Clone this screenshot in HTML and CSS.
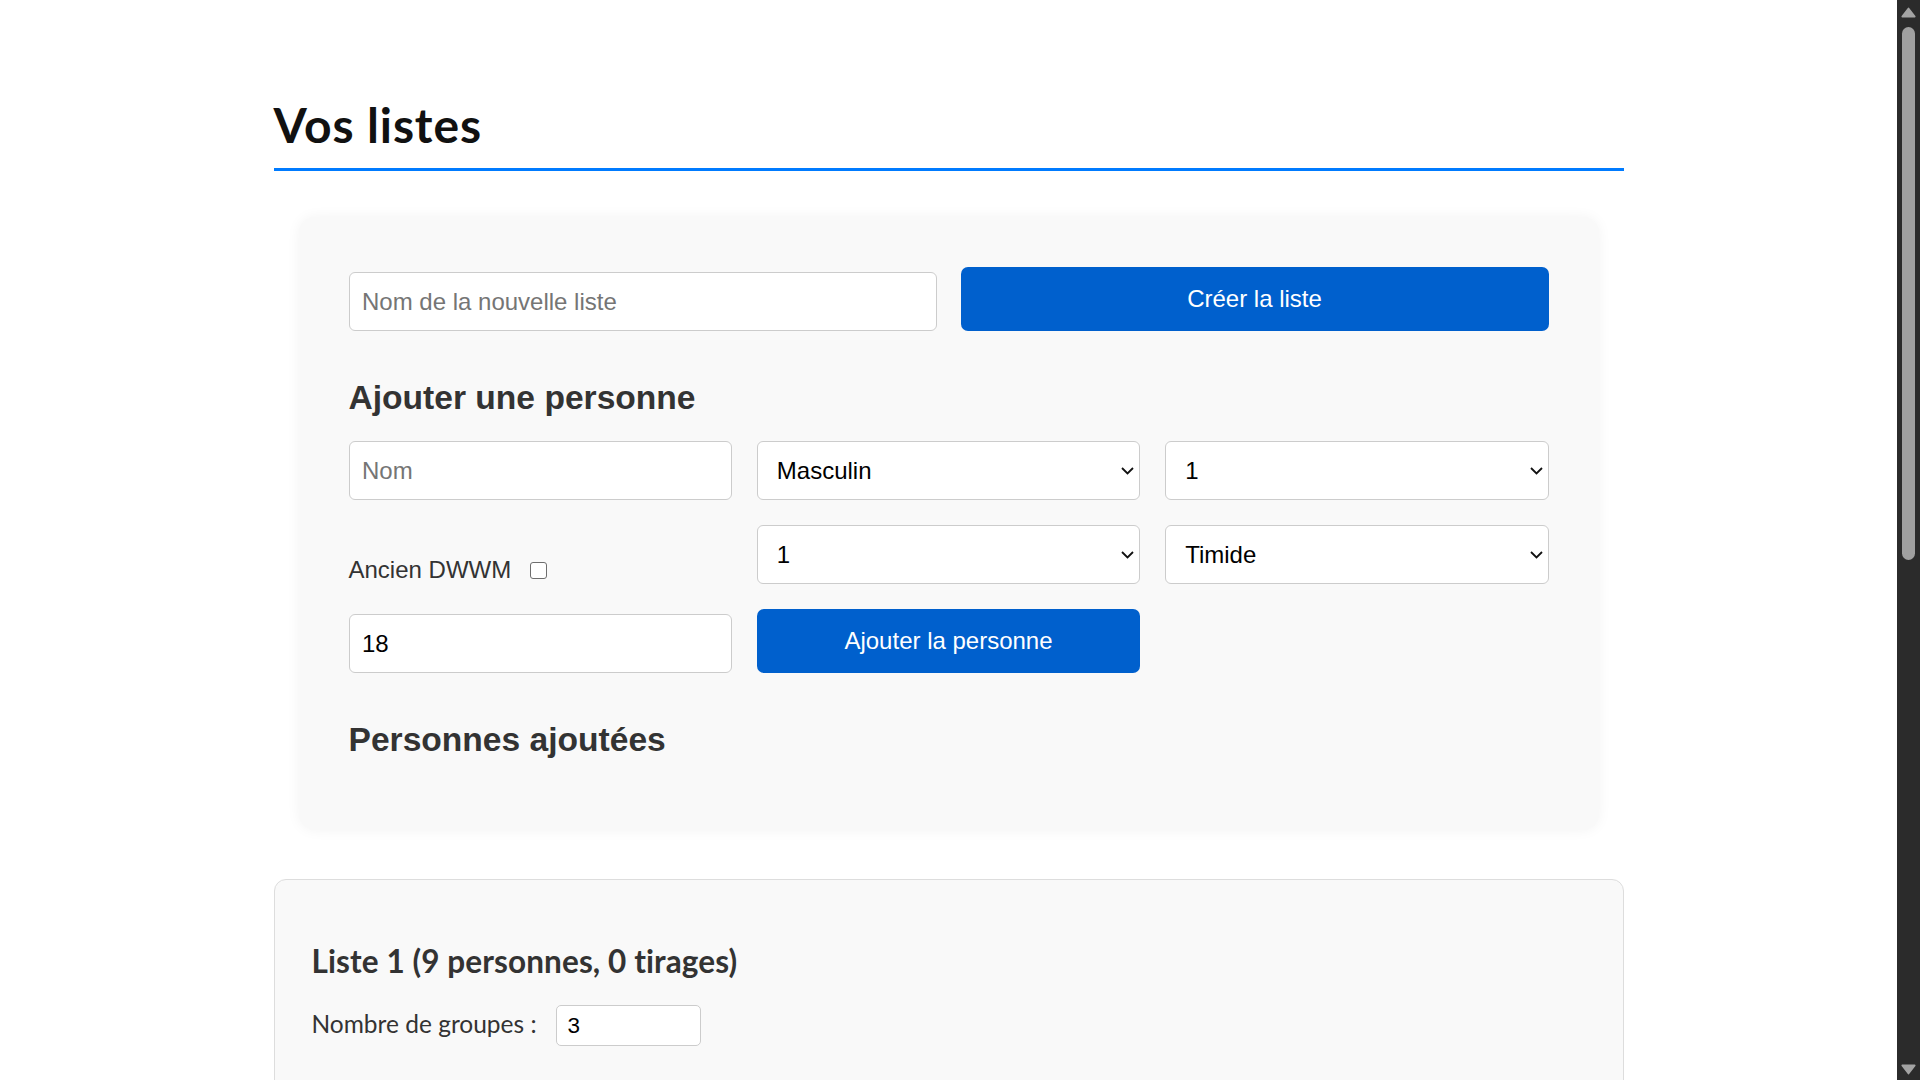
FILE: index.html
```html
<!DOCTYPE html>
<html lang="fr">
<head>
<meta charset="utf-8">
<title>Vos listes</title>
<link rel="stylesheet" href="styles.css">
</head>
<body>
<div class="scrollbar" aria-hidden="true">
  <svg class="sb-arrow" viewBox="0 0 14 10"><path d="M7 1.2 L12.8 8.8 H1.2 Z" fill="#a3a3a3" stroke="#a3a3a3" stroke-width="1.6" stroke-linejoin="round"/></svg>
  <div class="sb-thumb"></div>
  <div class="sb-spacer"></div>
  <svg class="sb-arrow" viewBox="0 0 14 10"><path d="M7 8.8 L12.8 1.2 H1.2 Z" fill="#a3a3a3" stroke="#a3a3a3" stroke-width="1.6" stroke-linejoin="round"/></svg>
</div>
<main class="container">
  <h1 class="page-title">Vos listes</h1>

  <section class="form-card">
    <div class="create-row">
      <input class="field" type="text" placeholder="Nom de la nouvelle liste">
      <button class="btn" type="button">Créer la liste</button>
    </div>

    <h3 class="section-title">Ajouter une personne</h3>
    <div class="person-grid">
      <input class="field" type="text" placeholder="Nom">
      <div class="select-wrap">
        <select class="field select"><option>Masculin</option><option>Féminin</option></select>
        <svg class="chevron" viewBox="0 0 13 8"><path d="M1 1 L6.5 6.5 L12 1" fill="none" stroke="#111" stroke-width="1.8"/></svg>
      </div>
      <div class="select-wrap">
        <select class="field select"><option>1</option><option>2</option><option>3</option></select>
        <svg class="chevron" viewBox="0 0 13 8"><path d="M1 1 L6.5 6.5 L12 1" fill="none" stroke="#111" stroke-width="1.8"/></svg>
      </div>
      <label class="check-label">Ancien DWWM <input class="check" type="checkbox"></label>
      <div class="select-wrap">
        <select class="field select"><option>1</option><option>2</option><option>3</option></select>
        <svg class="chevron" viewBox="0 0 13 8"><path d="M1 1 L6.5 6.5 L12 1" fill="none" stroke="#111" stroke-width="1.8"/></svg>
      </div>
      <div class="select-wrap">
        <select class="field select"><option>Timide</option><option>Extraverti</option></select>
        <svg class="chevron" viewBox="0 0 13 8"><path d="M1 1 L6.5 6.5 L12 1" fill="none" stroke="#111" stroke-width="1.8"/></svg>
      </div>
      <input class="field" type="text" value="18">
      <button class="btn" type="button">Ajouter la personne</button>
    </div>

    <h3 class="section-title">Personnes ajoutées</h3>
    <ul class="person-list"></ul>
  </section>

  <section class="list-card">
    <h3 class="list-title">Liste 1 (9 personnes, 0 tirages)</h3>
    <div class="groups-row">
      <label class="groups-label">Nombre de groupes :</label>
      <input class="small-field" type="text" value="3">
    </div>
  </section>
</main>
</body>
</html>
```

FILE: styles.css
```css
html, body {
  margin: 0;
}

body {
  background: #fff;
  padding-right: 23px;
  overflow: hidden;
  font-family: "Liberation Sans", Arial, sans-serif;
  color: #000;
}

/* fake dark scrollbar */
.scrollbar {
  position: fixed;
  top: 0;
  right: 0;
  width: 23px;
  height: 100vh;
  background: #2b2b2b;
  display: flex;
  flex-direction: column;
  align-items: center;
  padding: 7px 0 5px;
  box-sizing: border-box;
}

.sb-arrow {
  width: 15px;
  height: 11px;
  display: block;
}

.sb-thumb {
  width: 13px;
  height: 533px;
  margin-top: 9px;
  border-radius: 7px;
  background: #a0a0a0;
}

.sb-spacer {
  flex: 1;
}

.container {
  max-width: 1350px;
  margin: 0 auto;
}

.page-title {
  font-family: Lato, "Open Sans", sans-serif;
  font-weight: 700;
  font-size: 48px;
  letter-spacing: 0.9px;
  line-height: 56px;
  color: #111;
  margin: 0;
  padding-top: 97px;
  padding-bottom: 15px;
  border-bottom: 3px solid #007bff;
}

.form-card {
  margin: 46px 25px 49px;
  padding: 50px 50px 47px;
  background: #f9f9f9;
  border-radius: 16px;
  box-shadow: 0 0 14px rgba(0, 0, 0, 0.05);
}

.create-row {
  display: grid;
  grid-template-columns: 1fr 1fr;
  gap: 24px;
  align-items: end;
}

.field {
  display: block;
  width: 100%;
  height: 59px;
  box-sizing: border-box;
  border: 1px solid #ccc;
  border-radius: 6px;
  padding: 0 12.5px;
  font-family: "Liberation Sans", Arial, sans-serif;
  font-size: 24px;
  color: #000;
  background: #fff;
  outline: none;
}

.field::placeholder {
  color: #757575;
}

.btn {
  display: block;
  width: 100%;
  height: 64px;
  border: 0;
  border-radius: 7px;
  background: #0060cd;
  color: #fff;
  font-family: "Liberation Sans", Arial, sans-serif;
  font-size: 24px;
  cursor: pointer;
}

.section-title {
  font-family: "Liberation Sans", Arial, sans-serif;
  font-weight: 700;
  font-size: 33.6px;
  line-height: 39px;
  color: #333;
  margin: 47px 0 24px;
}

.person-grid {
  display: grid;
  grid-template-columns: repeat(3, 1fr);
  gap: 25px;
  align-items: end;
}

.select-wrap {
  position: relative;
}

.select {
  appearance: none;
  -webkit-appearance: none;
  padding-left: 19px;
  padding-right: 30px;
}

.chevron {
  position: absolute;
  right: 6px;
  top: 50%;
  width: 13px;
  height: 8px;
  margin-top: -4px;
  pointer-events: none;
}

.check-label {
  display: flex;
  align-items: center;
  gap: 19px;
  font-size: 24px;
  color: #333;
}

.check {
  appearance: none;
  -webkit-appearance: none;
  width: 17px;
  height: 17px;
  margin: 0;
  box-sizing: border-box;
  border: 1.6px solid #6e6e6e;
  border-radius: 3px;
  background: #fff;
}

.person-list {
  margin: 0;
  padding: 0;
  list-style: none;
}

.list-card {
  border: 1px solid #ddd;
  border-radius: 12px;
  background: #f9f9f9;
  padding: 37px;
  min-height: 900px;
}

.list-title {
  font-family: Lato, "Open Sans", sans-serif;
  font-weight: 700;
  font-size: 31.5px;
  letter-spacing: 0.1px;
  line-height: 37px;
  color: #333;
  margin: 26px 0 25px;
}

.groups-row {
  display: flex;
  align-items: center;
  gap: 19px;
}

.groups-label {
  font-family: Lato, "Open Sans", sans-serif;
  font-size: 24.5px;
  color: #333;
  padding-bottom: 4px;
}

.small-field {
  width: 145px;
  height: 41px;
  box-sizing: border-box;
  border: 1px solid #ccc;
  border-radius: 5px;
  padding: 0 11px;
  font-family: "Liberation Sans", Arial, sans-serif;
  font-size: 22.5px;
  color: #000;
  background: #fff;
  outline: none;
}
```
